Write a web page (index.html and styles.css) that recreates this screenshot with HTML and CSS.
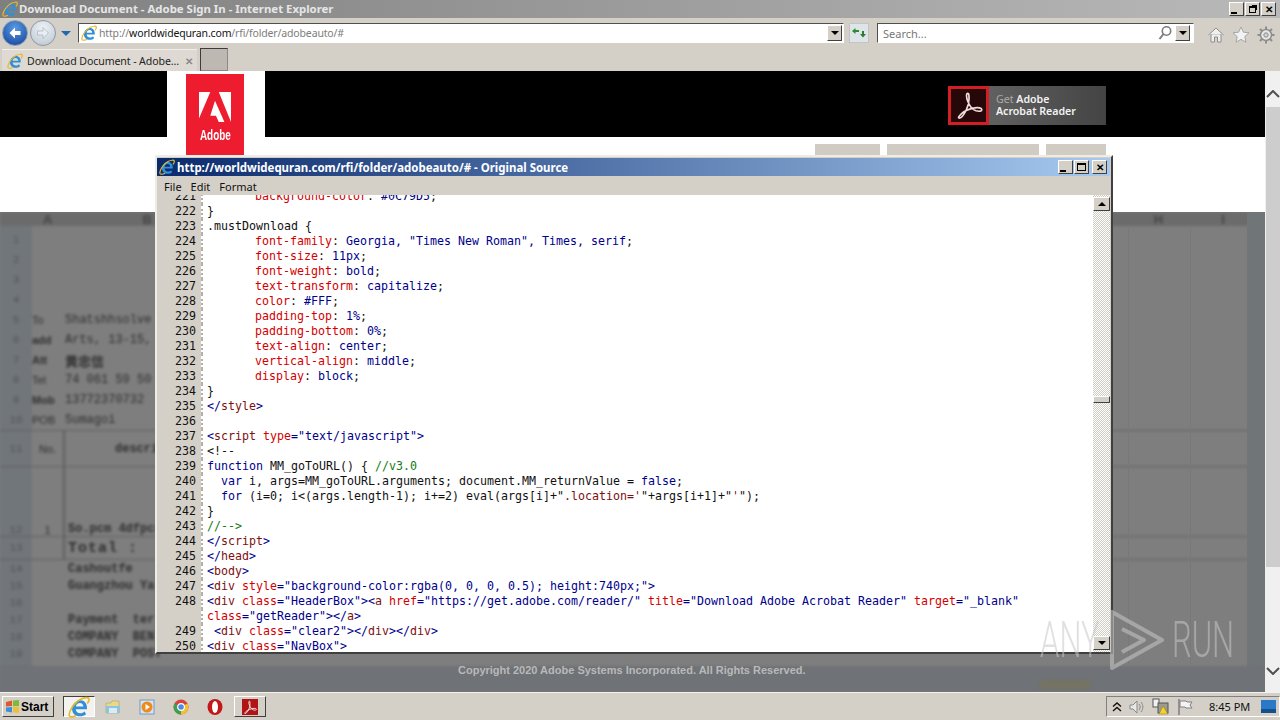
FILE: index.html
```html
<!DOCTYPE html>
<html lang="en">
<head>
    <meta charset="UTF-8">
    <title>Download Document - Adobe Sign In - Internet Explorer</title>
    <link rel="stylesheet" href="styles.css">
</head>
<body>

    <svg class="defs" width="0" height="0">
        <symbol id="ie" viewBox="0 0 16 16">
            <path d="M3 9.500C3 5.500 6 3 9 3c3 0 4.800 2.300 4.800 5.600v1H5.600c.2 2 1.600 3 3.300 3 1.300 0 2.300-.5 3.200-1.300l1 2c-1.300 1-2.800 1.500-4.400 1.500C5.200 14.800 3 12.700 3 9.500zM5.700 7.700h5.500C11 6 10.200 5.100 8.600 5.100 7.100 5.100 6 6.100 5.700 7.700z" fill="#2f8fd8"/>
            <path d="M1 14.500C.2 12 4 5 9 2.500c3-1.500 6-1.800 6.300-.3.200 1-.5 2.300-1.300 3.300M1 14.500c.6 1.200 3 .8 5-.3" fill="none" stroke="#e8b828" stroke-width="1.200"/>
        </symbol>
        <symbol id="acro" viewBox="0 0 24 24">
            <path d="M11 2c-1.500 0-1.500 3 0 7 1.500 4 4 7 7 8 3 .8 5 .2 5-1 0-1.500-3-2-6-1.500-4 .7-9 2.500-12 5.500-2 2-2.500 3-1.500 3.200 1.500.3 4-2.500 6-6.500 1.500-3 2.800-7 2.500-11C12 3 11.800 2 11 2z" fill="none" stroke="currentColor" stroke-width="1.400"/>
        </symbol>
    </svg>

    <!-- IE title bar -->
    <div class="ie-title">
        <svg class="ico16"><use href="#ie"/></svg>
        <span class="ie-title-text">Download Document - Adobe Sign In - Internet Explorer</span>
        <div class="win-btns">
            <span class="win-btn"><i class="g-min"></i></span>
            <span class="win-btn"><i class="g-rest"></i></span>
            <span class="win-btn g-x">✕</span>
        </div>
    </div>

    <!-- Navigation row -->
    <div class="ie-nav">
        <span class="nav-back">
            <svg width="14" height="14" viewBox="0 0 14 14"><path d="M7 1.500 1.500 7 7 12.500V9h5.500V5H7z" fill="#fff"/></svg>
        </span>
        <span class="nav-fwd">
            <svg width="14" height="14" viewBox="0 0 14 14"><path d="M7 1.500 12.500 7 7 12.500V9H1.500V5H7z" fill="#e8eef4" stroke="#9aa4ae" stroke-width=".6"/></svg>
        </span>
        <span class="nav-drop"></span>
        <div class="addr">
            <svg class="ico16"><use href="#ie"/></svg>
            <span class="addr-text">http://<b>worldwidequran.com</b>/rfi/folder/adobeauto/#</span>
            <span class="drop-btn"><i></i></span>
        </div>
        <span class="refresh">
            <svg width="16" height="14" viewBox="0 0 16 14"><path d="M1 5 4.500 2v2H8v2H4.500v2z" fill="#2e8b2e"/><path d="M15 8l-3 3.500L9 8h2V5h2v3z" fill="#2e7d2e"/></svg>
        </span>
        <div class="search">
            <span class="search-text">Search...</span>
            <svg width="16" height="16" viewBox="0 0 16 16"><circle cx="9.500" cy="6" r="4.200" fill="none" stroke="#7c7c7c" stroke-width="1.600"/><path d="M6.500 9 2.500 14" stroke="#7c7c7c" stroke-width="2"/></svg>
            <span class="drop-btn"><i></i></span>
        </div>
        <div class="tools">
            <svg width="18" height="18" viewBox="0 0 18 18"><path d="M1.500 9 9 2l7.500 7M4 8v8h3.500v-5h3v5H14V8" fill="#efefef" stroke="#8d8d8d"/></svg>
            <svg width="18" height="18" viewBox="0 0 18 18"><path d="M9 1l2.400 5.200 5.600.6-4.200 3.800 1.200 5.600L9 13.400 4 16.200l1.200-5.600L1 6.800l5.600-.6z" fill="#f2f2f2" stroke="#a5a5a5"/></svg>
            <svg width="18" height="18" viewBox="0 0 18 18"><circle cx="9" cy="9" r="5.500" fill="#e8e8e8" stroke="#8d8d8d" stroke-width="1.500"/><circle cx="9" cy="9" r="2.200" fill="#d4d0c8" stroke="#8d8d8d"/><path d="M9 .5v3M9 14.500v3M.5 9h3M14.500 9h3M3 3l2 2M13 13l2 2M15 3l-2 2M5 13l-2 2" stroke="#8d8d8d" stroke-width="2"/></svg>
        </div>
    </div>

    <!-- Tab row -->
    <div class="ie-tabs">
        <div class="tab">
            <svg class="ico16"><use href="#ie"/></svg>
            <span class="tab-text">Download Document - Adobe…</span>
            <span class="tab-close">✕</span>
        </div>
        <span class="tab-new"></span>
    </div>

    <!-- Page area -->
    <div class="viewport">
        <div class="page">
            <div class="head">
                <a class="get-reader">
                    <span class="reader-ico"><svg width="28" height="28"><use href="#acro"/></svg></span>
                    <span class="reader-text"><em>Get</em> Adobe<br>Acrobat Reader</span>
                </a>
            </div>
            <div class="nav-band">
                <span class="nav-item w65"></span>
                <span class="nav-item w152"></span>
                <span class="nav-item w60"></span>
            </div>

            <!-- blurred spreadsheet behind -->
            <div class="sheet">
                <div class="sheet-blur">
                    <div class="col-head"><span>A</span><span class="c-b">B</span><span class="c-r1">H</span><span class="c-r2">I</span></div>
                    <div class="row"><span class="rh">1</span></div>
                    <div class="row"><span class="rh">2</span></div>
                    <div class="row"><span class="rh">3</span></div>
                    <div class="row"><span class="rh">4</span></div>
                    <div class="row"><span class="rh">5</span><span class="c1">To</span><span>Shatshhsolve</span></div>
                    <div class="row"><span class="rh">6</span><span class="c1 bold">add</span><span>Arts, 13-15,</span></div>
                    <div class="row"><span class="rh">7</span><span class="c1 bold">Att</span><span class="bold cjk">黄忠信</span></div>
                    <div class="row"><span class="rh">8</span><span class="c1">Tel</span><span>74 061 59 50</span></div>
                    <div class="row"><span class="rh">9</span><span class="c1 bold">Mob</span><span>13772370732</span></div>
                    <div class="row"><span class="rh">10</span><span class="c1">POB</span><span>Sumagoi</span></div>
                    <div class="row r37 ruled top"><span class="rh">11</span><span class="c1 split center">No.</span><span class="c-desc bold">descrip</span></div>
                    <div class="row r70 ruled"><span class="rh">12</span><span class="c1 split center">1</span><span class="bold c2">So.pcm 4dfpcs</span></div>
                    <div class="row r23 ruled"><span class="rh">13</span><span class="c1 split"></span><span class="total">Total :</span></div>
                    <div class="row r17"><span class="rh">14</span><span class="c1"></span><span class="bold c2">Cashoutfe</span></div>
                    <div class="row r17"><span class="rh">15</span><span class="c1"></span><span class="bold c2">Guangzhou Ya</span></div>
                    <div class="row r17"><span class="rh">16</span></div>
                    <div class="row r17"><span class="rh">17</span><span class="c1"></span><span class="bold c2">Payment  ter</span></div>
                    <div class="row r17"><span class="rh">18</span><span class="c1"></span><span class="bold c2">COMPANY  BEN</span></div>
                    <div class="row r17"><span class="rh">19</span><span class="c1"></span><span class="bold c2">COMPANY  POST</span></div>
                </div>
                <span class="sheet-side"></span>
                <span class="sheet-line l1"></span>
                <span class="sheet-line l2"></span>
                <span class="sheet-tabs"></span>
                <span class="sheet-tabs-hi"></span>
                <p class="copy">Copyright 2020 Adobe Systems Incorporated. All Rights Reserved.</p>
            </div>

            <!-- logo hangs over the header -->
            <div class="logo-wrap">
                <div class="logo">
                    <svg width="32" height="30" viewBox="0 0 34 34" preserveAspectRatio="none">
                        <path d="M0 0h12L0 30zM21 0h13v34zM17 10l10 24h-6l-3-7h-6z" fill="#fff"/>
                    </svg>
                    <span class="logo-text">Adobe</span>
                </div>
            </div>
        </div>

        <div class="page-scroll">
            <span class="chev">
                <svg width="14" height="8" viewBox="0 0 14 8"><path d="M1 7l6-6 6 6" fill="none" stroke="#505050" stroke-width="2"/></svg>
            </span>
            <span class="page-thumb"></span>
            <span class="chev">
                <svg width="14" height="8" viewBox="0 0 14 8"><path d="M1 1l6 6 6-6" fill="none" stroke="#505050" stroke-width="2"/></svg>
            </span>
        </div>
    </div>

    <!-- Taskbar -->
    <div class="taskbar">
        <span class="start">
            <svg width="15" height="15" viewBox="0 0 15 15">
                <path d="M1 3l6-1.500V7L1 7.500z" fill="#e2562c"/><path d="M8 1.500 14 1v6l-6 .2z" fill="#7fb83a"/><path d="M1 8.500 7 8v5.500l-6-1z" fill="#3c8ee0"/><path d="M8 8l6-.2V14l-6-.8z" fill="#f0c030"/>
            </svg>
            Start
        </span>
        <span class="task-btn active"><svg width="22" height="22"><use href="#ie"/></svg></span>
        <span class="task-ico">
            <svg width="16" height="16" viewBox="0 0 16 16"><path d="M1 4h5l1-2h7v12H1z" fill="#e8d98c" stroke="#b0a060" stroke-width=".6"/><path d="M1 7h14v7H1z" fill="#8fc4dc"/><path d="M4 14V9h8v5" fill="#d8ecf4"/></svg>
        </span>
        <span class="task-ico">
            <svg width="16" height="16" viewBox="0 0 16 16"><rect x="1" y="1" width="14" height="14" fill="#d8e4f0" stroke="#6d9ac8"/><circle cx="8" cy="8" r="5.500" fill="#ee8a1c"/><path d="M6.500 5v6L11 8z" fill="#fff"/></svg>
        </span>
        <span class="task-ico">
            <svg width="16" height="16" viewBox="0 0 16 16"><circle cx="8" cy="8" r="7.500" fill="#d8443a"/><path d="M8 8 14.500 4.500A7.500 7.500 0 0 1 8 15.500z" fill="#f2c230"/><path d="M8 8 8 15.500A7.500 7.500 0 0 1 1.500 4.500z" fill="#3ca050"/><circle cx="8" cy="8" r="3.400" fill="#4a8ce8" stroke="#fff" stroke-width="1.200"/></svg>
        </span>
        <span class="task-ico">
            <svg width="16" height="18" viewBox="0 0 16 18"><ellipse cx="8" cy="9" rx="7.500" ry="8" fill="#c41818"/><ellipse cx="8" cy="9" rx="3" ry="6" fill="#fff"/></svg>
        </span>
        <span class="task-btn acro">
            <span class="acro-box"><svg width="14" height="14"><use href="#acro"/></svg></span>
        </span>
        <div class="tray">
            <svg width="10" height="10" viewBox="0 0 10 10"><path d="M1 4.500 5 1l4 3.500M1 9l4-3.500L9 9" fill="none" stroke="#111" stroke-width="1.400"/></svg>
            <svg width="16" height="16" viewBox="0 0 16 16"><path d="M1 6h3l4-4v12l-4-4H1z" fill="#e8e8e8" stroke="#8a8a8a"/><path d="M10 5c1.500 1.500 1.500 4.500 0 6M12 3c2.500 3 2.500 7 0 10" fill="none" stroke="#8a8a8a"/></svg>
            <svg width="18" height="18" viewBox="0 0 18 18"><rect x="1" y="1" width="6" height="8" fill="#f2f2f2" stroke="#555"/><rect x="6" y="5" width="10" height="10" fill="#9c9c8c" stroke="#555"/><path d="M11 8l5 8H7z" fill="#f4d030" stroke="#8c7010" stroke-width=".5"/></svg>
            <svg width="16" height="18" viewBox="0 0 16 18"><path d="M2 1v16" stroke="#777" stroke-width="1.400"/><path d="M3 3h6l1 1h5l-2 3 2 3H9L8 9H3z" fill="#f4f4f4" stroke="#808080"/></svg>
            <span class="clock">8:45 PM</span>
            <svg width="15" height="13" viewBox="0 0 15 13"><rect width="15" height="13" fill="#2a78c8"/><path d="M0 9h15v4H0z" fill="#14508c"/></svg>
        </div>
    </div>

    <!-- View source window -->
    <div class="src-win">
        <div class="src-title">
            <svg class="ico16"><use href="#ie"/></svg>
            <span class="src-title-text">http://worldwidequran.com/rfi/folder/adobeauto/# - Original Source</span>
            <div class="src-btns">
                <span class="win-btn"><i class="g-min"></i></span>
                <span class="win-btn"><i class="g-max"></i></span>
                <span class="win-btn g-x">✕</span>
            </div>
        </div>
        <div class="src-menu"><span>File</span><span>Edit</span><span>Format</span></div>
        <div class="src-body">
            <div class="code">
                <div class="ln"><span class="n">221</span><span class="c ind"><u>background-color</u>: <q>#0C79D5</q>;</span></div>
                <div class="ln"><span class="n">222</span><span class="c">}</span></div>
                <div class="ln"><span class="n">223</span><span class="c">.mustDownload {</span></div>
                <div class="ln"><span class="n">224</span><span class="c ind"><u>font-family</u>: <q>Georgia, "Times New Roman", Times, serif</q>;</span></div>
                <div class="ln"><span class="n">225</span><span class="c ind"><u>font-size</u>: <q>11px</q>;</span></div>
                <div class="ln"><span class="n">226</span><span class="c ind"><u>font-weight</u>: <q>bold</q>;</span></div>
                <div class="ln"><span class="n">227</span><span class="c ind"><u>text-transform</u>: <q>capitalize</q>;</span></div>
                <div class="ln"><span class="n">228</span><span class="c ind"><u>color</u>: <q>#FFF</q>;</span></div>
                <div class="ln"><span class="n">229</span><span class="c ind"><u>padding-top</u>: <q>1%</q>;</span></div>
                <div class="ln"><span class="n">230</span><span class="c ind"><u>padding-bottom</u>: <q>0%</q>;</span></div>
                <div class="ln"><span class="n">231</span><span class="c ind"><u>text-align</u>: <q>center</q>;</span></div>
                <div class="ln"><span class="n">232</span><span class="c ind"><u>vertical-align</u>: <q>middle</q>;</span></div>
                <div class="ln"><span class="n">233</span><span class="c ind"><u>display</u>: <q>block</q>;</span></div>
                <div class="ln"><span class="n">234</span><span class="c">}</span></div>
                <div class="ln"><span class="n">235</span><span class="c"><q>&lt;/</q><b>style</b><q>&gt;</q></span></div>
                <div class="ln"><span class="n">236</span><span class="c"></span></div>
                <div class="ln"><span class="n">237</span><span class="c"><q>&lt;</q><b>script</b> <u>type</u><q>="text/javascript"&gt;</q></span></div>
                <div class="ln"><span class="n">238</span><span class="c">&lt;!--</span></div>
                <div class="ln"><span class="n">239</span><span class="c"><q>function</q> MM_goToURL() { <s>//v3.0</s></span></div>
                <div class="ln"><span class="n">240</span><span class="c">  <q>var</q> i, args=MM_goToURL.arguments; document.MM_returnValue = <q>false</q>;</span></div>
                <div class="ln"><span class="n">241</span><span class="c">  <q>for</q> (i=0; i&lt;(args.length-1); i+=2) eval(args[i]+"<b>.location='</b>"+args[i+1]+"<b>'</b>");</span></div>
                <div class="ln"><span class="n">242</span><span class="c">}</span></div>
                <div class="ln"><span class="n">243</span><span class="c"><s>//--&gt;</s></span></div>
                <div class="ln"><span class="n">244</span><span class="c"><q>&lt;/</q><b>script</b><q>&gt;</q></span></div>
                <div class="ln"><span class="n">245</span><span class="c"><q>&lt;/</q><b>head</b><q>&gt;</q></span></div>
                <div class="ln"><span class="n">246</span><span class="c"><q>&lt;</q><b>body</b><q>&gt;</q></span></div>
                <div class="ln"><span class="n">247</span><span class="c"><q>&lt;</q><b>div</b> <u>style</u><q>="background-color:rgba(0, 0, 0, 0.5); height:740px;"&gt;</q></span></div>
                <div class="ln"><span class="n">248</span><span class="c"><q>&lt;</q><b>div</b> <u>class</u><q>="HeaderBox"&gt;&lt;</q><b>a</b> <u>href</u><q>="https://get.adobe.com/reader/"</q> <u>title</u><q>="Download Adobe Acrobat Reader"</q> <u>target</u><q>="_blank"</q></span></div>
                <div class="ln"><span class="n"></span><span class="c"><u>class</u><q>="getReader"&gt;&lt;/</q><b>a</b><q>&gt;</q></span></div>
                <div class="ln"><span class="n">249</span><span class="c"> <q>&lt;</q><b>div</b> <u>class</u><q>="clear2"&gt;&lt;/</q><b>div</b><q>&gt;&lt;/</q><b>div</b><q>&gt;</q></span></div>
                <div class="ln"><span class="n">250</span><span class="c"><q>&lt;</q><b>div</b> <u>class</u><q>="NavBox"&gt;</q></span></div>
            </div>
            <div class="src-scroll">
                <span class="sb-btn"><i class="up"></i></span>
                <span class="sb-thumb"></span>
                <span class="sb-btn"><i class="down"></i></span>
            </div>
        </div>
    </div>

    <!-- Watermark -->
    <div class="wm">
        <span class="wm-text">ANY</span>
        <svg class="wm-ico" width="56" height="62" viewBox="0 0 56 62"><path d="M4 3v56l50-28L4 3zM14 20l22 11-22 12" fill="none" stroke="currentColor" stroke-width="4" stroke-linejoin="round"/></svg>
        <span class="wm-text">RUN</span>
    </div>

</body>
</html>
```

FILE: styles.css
```css
/* General */
body { margin: 0; width: 1280px; height: 720px; overflow: hidden; display: flex; flex-direction: column; font-family: "Noto Sans", sans-serif; font-size: 11px; color: #222; background-color: #d4d0c8; position: relative; }
.defs { position: absolute; }
.ico16 { width: 16px; height: 16px; flex: none; }

/* IE title bar */
.ie-title { height: 18px; flex: none; display: flex; align-items: center; padding-left: 2px; gap: 1px; background: linear-gradient(90deg, #7f7f7f, #b9b9b9); }
.ie-title-text { font-weight: 700; font-size: 11.4px; color: #e6e6e6; margin-top: -2px; }
.win-btns { margin-left: auto; margin-right: 4px; display: flex; gap: 1px; }
.win-btn { width: 15px; height: 14px; box-sizing: border-box; background-color: #d4d0c8; border: 1px solid; border-color: #fff #404040 #404040 #fff; display: flex; align-items: center; justify-content: center; font-size: 10px; font-weight: 700; line-height: 1; color: #000; position: relative; }
.g-min { width: 6px; height: 2px; background-color: #000; align-self: flex-end; margin: 0 5px 1px 0; }
.g-max { width: 9px; height: 8px; border: 1px solid #000; border-top-width: 2px; box-sizing: border-box; }
.g-rest { width: 7px; height: 7px; border: 1px solid #000; border-top-width: 2px; box-sizing: border-box; box-shadow: 2px -2px 0 -1px #000; }

/* Navigation row */
.ie-nav { height: 28px; flex: none; box-sizing: border-box; padding: 2px 0 0 2px; display: flex; align-items: center; }
.nav-back { width: 26px; height: 26px; border-radius: 50%; background: radial-gradient(circle at 50% 30%, #5a9be0, #123f9a); border: 1px solid #8ca0b8; box-sizing: border-box; display: flex; align-items: center; justify-content: center; }
.nav-fwd { width: 26px; height: 26px; margin-left: 2px; border-radius: 50%; background: radial-gradient(circle at 50% 30%, #eef2f6, #b9c4cf); border: 1px solid #8d98a4; box-sizing: border-box; display: flex; align-items: center; justify-content: center; }
.nav-drop { width: 0; height: 0; margin-left: 5px; border: 5px solid transparent; border-top: 5px solid #1e6ab0; border-bottom: 0; }
.addr { width: 766px; height: 20px; margin-left: 7px; box-sizing: border-box; background-color: #fff; border: 1px solid; border-color: #505050 #fff #fff #505050; display: flex; align-items: center; padding: 0 1px 0 2px; gap: 2px; }
.addr-text { font-size: 10.5px; letter-spacing: -.15px; color: #7d7d7d; }
.addr-text b { font-weight: 400; color: #111; }
.drop-btn { width: 15px; height: 16px; margin-left: auto; flex: none; box-sizing: border-box; background-color: #d4d0c8; border: 1px solid; border-color: #fff #404040 #404040 #fff; display: flex; align-items: center; justify-content: center; }
.drop-btn i { border: 4px solid transparent; border-top: 4px solid #000; border-bottom: 0; }
.refresh { width: 20px; height: 20px; margin-left: 5px; background-color: #dde4ea; border: 1px solid #c4c4c4; box-sizing: border-box; display: flex; align-items: center; justify-content: center; }
.search { width: 317px; height: 20px; margin-left: 8px; box-sizing: border-box; background-color: #fff; border: 1px solid; border-color: #505050 #fff #fff #505050; display: flex; align-items: center; padding: 0 3px 0 5px; }
.search-text { color: #777; flex: 1; }
.search .drop-btn { margin-left: 2px; }
.tools { display: flex; align-items: center; gap: 7px; margin-left: 13px; margin-top: 4px; }

/* Tab row */
.ie-tabs { height: 25px; flex: none; display: flex; align-items: flex-end; padding-left: 2px; gap: 3px; }
.tab { width: 195px; height: 22px; box-sizing: border-box; background-color: #dedad3; border-top: 1px solid #f2f0ec; display: flex; align-items: center; gap: 1px; padding: 0 4px 0 5px; }
.tab-text { flex: 1; color: #222; padding-left: 3px; font-size: 10.6px; letter-spacing: -.1px; white-space: nowrap; }
.tab-close { color: #8a8a8a; font-size: 10px; font-weight: 700; }
.tab-new { width: 28px; height: 23px; box-sizing: border-box; background-color: #bdb9b2; border: 1px solid; border-color: #3c3c3c #8a8a8a #8a8a8a #3c3c3c; }

/* Page */
.viewport { flex: 1; display: flex; min-height: 0; }
.page { flex: 1; display: flex; flex-direction: column; position: relative; min-width: 0; background-color: #fff; }
.head { height: 66px; flex: none; background-color: #000; display: flex; justify-content: flex-end; align-items: center; padding-right: 159px; padding-top: 2px; box-sizing: border-box; }
.get-reader { width: 158px; height: 39px; display: flex; align-items: center; background: linear-gradient(90deg, #6a6a6a, #444); }
.reader-ico { width: 41px; height: 39px; box-sizing: border-box; border: 3px solid #d21f26; background-color: #260808; color: #f0dcdc; display: flex; align-items: center; justify-content: center; }
.reader-text { margin-left: 7px; font-size: 10.6px; line-height: 12px; font-weight: 600; color: #f2f2f2; }
.reader-text em { font-style: normal; font-weight: 400; color: #aaa; }
.nav-band { height: 75px; flex: none; box-sizing: border-box; padding: 7px 159px 0 0; display: flex; justify-content: flex-end; gap: 7px; }
.nav-item { height: 11px; background-color: #d0ccc4; }
.w65 { width: 65px; }
.w152 { width: 152px; }
.w60 { width: 60px; }

/* Blurred sheet */
.sheet { flex: 1; position: relative; overflow: hidden; background-color: #7e7e7e; }
.sheet-blur { filter: blur(1.4px); font-family: "Liberation Mono", monospace; font-size: 12px; color: #2e2e2e; display: flex; flex-direction: column; background: linear-gradient(90deg, #71767a 32px, #7e7e7e 32px); height: 100%; }
.col-head { height: 14px; margin-bottom: 4px; flex: none; display: flex; background-color: #6b6b6b; color: #444; font-family: "Liberation Sans", sans-serif; font-size: 13px; font-weight: 700; align-items: center; padding-left: 43px; }
.c-b { margin-left: 90px; }
.c-r1 { margin-left: 1002px; }
.c-r2 { margin-left: 58px; }
.row { height: 20px; flex: none; display: flex; align-items: center; white-space: pre; }
.rh { width: 32px; flex: none; text-align: center; color: #555; font-size: 11px; }
.c1 { width: 33px; flex: none; box-sizing: border-box; font-size: 11px; font-family: "Liberation Sans", sans-serif; }
.split { align-self: stretch; display: flex; align-items: center; justify-content: center; border-right: 2px solid #5e5e5e; }
.center { text-align: center; }
.c2 { margin-left: 3px; }
.c-desc { margin-left: 50px; }
.bold { font-weight: 700; }
.cjk { font-family: "Noto Sans CJK SC", sans-serif; font-size: 13px; }
.r37 { height: 37px; }
.r70 { height: 70px; align-items: flex-end; }
.r70 .split { align-items: flex-end; }
.r23 { height: 23px; }
.r17 { height: 17px; }
.ruled { border-bottom: 1px solid #5e5e5e; box-sizing: border-box; }
.top { border-top: 1px solid #5e5e5e; }
.total { font-size: 15px; margin-left: 3px; font-weight: 700; letter-spacing: 1px; }
.sheet-side { position: absolute; top: 0; bottom: 0; right: 0; width: 18px; background-color: #707578; }
.sheet-line { position: absolute; top: 14px; bottom: 28px; width: 1px; background-color: #787878; }
.l1 { left: 1128px; }
.l2 { left: 1190px; }
.sheet-tabs { position: absolute; left: 0; right: 0; bottom: 0; height: 26px; background-color: #6f7276; filter: blur(1px); }
.sheet-tabs-hi { position: absolute; left: 1040px; bottom: 3px; width: 50px; height: 8px; background-color: #7c7452; opacity: .6; filter: blur(2px); }
.copy { position: absolute; left: 458px; top: 452px; margin: 0; font-family: "Liberation Sans", Arial, sans-serif; font-size: 11px; font-weight: 700; color: #b9b9b9; }

/* Logo */
.logo-wrap { position: absolute; left: 167px; top: 0; width: 98px; height: 85px; background-color: #fff; display: flex; justify-content: center; }
.logo { width: 58px; height: 81px; margin-top: 3px; margin-left: -2px; background-color: #ed1c2e; display: flex; flex-direction: column; align-items: center; padding-top: 18px; box-sizing: border-box; }
.logo-text { font-family: "Liberation Sans", Arial, sans-serif; font-weight: 700; font-size: 15px; line-height: 16px; color: #fff; margin-top: 5px; transform: scaleX(.66); }

/* Page scrollbar */
.page-scroll { width: 15px; flex: none; background-color: #f0f0f0; display: flex; flex-direction: column; align-items: center; position: relative; }
.chev { height: 15px; display: flex; align-items: center; margin-top: 15px; }
.chev:last-child { margin-top: auto; margin-bottom: 14px; }
.page-thumb { position: absolute; left: 1px; right: 0; top: 36px; height: 460px; background-color: #cdcdcd; }

/* Taskbar */
.taskbar { height: 28px; flex: none; box-sizing: border-box; border-top: 1px solid #f4f2ee; background-color: #d4d0c8; display: flex; align-items: center; padding-left: 2px; }
.start { width: 52px; height: 21px; box-sizing: border-box; background-color: #d4d0c8; border: 1px solid; border-color: #fff #404040 #404040 #fff; display: flex; align-items: center; gap: 1px; padding-left: 2px; font-family: "Liberation Sans", Arial, sans-serif; font-weight: 700; font-size: 12px; color: #000; }
.task-btn { height: 21px; box-sizing: border-box; display: flex; align-items: center; justify-content: center; }
.task-btn.active { width: 32px; margin-left: 9px; background-color: #f4f2ee; border: 1px solid; border-color: #404040 #fff #fff #404040; }
.task-ico { width: 16px; height: 18px; display: flex; align-items: center; justify-content: center; margin-left: 18px; }
.task-btn.active + .task-ico { margin-left: 10px; }
.task-btn.acro { width: 32px; margin-left: 11px; background-color: #d4d0c8; border: 1px solid; border-color: #fff #404040 #404040 #fff; }
.acro-box { width: 16px; height: 16px; background-color: #b01414; color: #fff; display: flex; align-items: center; justify-content: center; }
.tray { margin-left: auto; width: 174px; height: 21px; box-sizing: border-box; border: 1px solid; border-color: #808080 #fff #fff #808080; display: flex; align-items: center; padding-left: 5px; gap: 7px; }
.clock { margin-left: 9px; font-size: 11px; color: #111; width: 45px; }

/* Source window */
.src-win { position: absolute; left: 155px; top: 155px; width: 958px; height: 499px; box-sizing: border-box; background-color: #d4d0c8; border: 2px solid; border-color: #efece6 #404040 #404040 #efece6; padding: 1px 1px 0 0; display: flex; flex-direction: column; }
.src-title { height: 18px; flex: none; display: flex; align-items: center; gap: 2px; padding-left: 2px; background: linear-gradient(90deg, #0a2a6c, #a6caf0); }
.src-title-text { font-weight: 700; font-size: 11.46px; color: #fff; }
.src-btns { margin-left: auto; margin-right: 3px; display: flex; gap: 1px; }
.src-btns .g-x { margin-left: 2px; }
.src-menu { height: 19px; flex: none; display: flex; align-items: center; gap: 9px; padding-left: 7px; padding-top: 1px; box-sizing: border-box; color: #111; }
.src-body { flex: 1; min-height: 0; display: flex; background-color: #fff; }

/* Code */
.code { flex: 1; min-width: 0; overflow: hidden; font-family: "DejaVu Sans Mono", monospace; font-size: 11.63px; line-height: 15px; color: #111; }
.ln { display: flex; height: 15px; white-space: pre; }
.ln:first-child { margin-top: -6px; }
.n { width: 39px; flex: none; padding-right: 5px; text-align: right; background-color: #d4d0c8; }
.c { border-left: 2px dotted #b4b0a8; padding-left: 4px; flex: 1; }
.c.ind { padding-left: 52px; }
.c u { text-decoration: none; color: #d40000; }
.c q { quotes: none; color: #00008b; }
.c b { font-weight: 400; color: #7e1010; }
.c s { text-decoration: none; color: #137a13; }

/* Source scrollbar */
.src-scroll { width: 17px; flex: none; display: flex; flex-direction: column; justify-content: space-between; position: relative; padding: 2px 0; box-sizing: border-box; background-color: #f0eeea; background-image: repeating-conic-gradient(#cfccc4 0 25%, #fff 0 50%); background-size: 2px 2px; }
.sb-btn { height: 14px; box-sizing: border-box; background-color: #d4d0c8; border: 1px solid; border-color: #fff #404040 #404040 #fff; display: flex; align-items: center; justify-content: center; }
.sb-btn .up { border: 4px solid transparent; border-bottom: 4px solid #000; border-top: 0; }
.sb-btn .down { border: 4px solid transparent; border-top: 4px solid #000; border-bottom: 0; }
.sb-thumb { position: absolute; left: 0; right: 0; top: 201px; height: 7px; background-color: #d4d0c8; border: 1px solid; border-color: #fff #404040 #404040 #fff; box-sizing: border-box; }

/* Watermark */
.wm { position: absolute; left: 1040px; top: 609px; display: flex; align-items: center; color: #c8c8c8; opacity: .55; pointer-events: none; }
.wm-ico { margin-left: 10px; margin-right: 8px; }
.wm-text { font-family: "Roboto", sans-serif; font-weight: 300; font-size: 50px; line-height: 62px; width: 58px; display: inline-block; transform: scaleX(.62); transform-origin: left center; white-space: nowrap; }
```
